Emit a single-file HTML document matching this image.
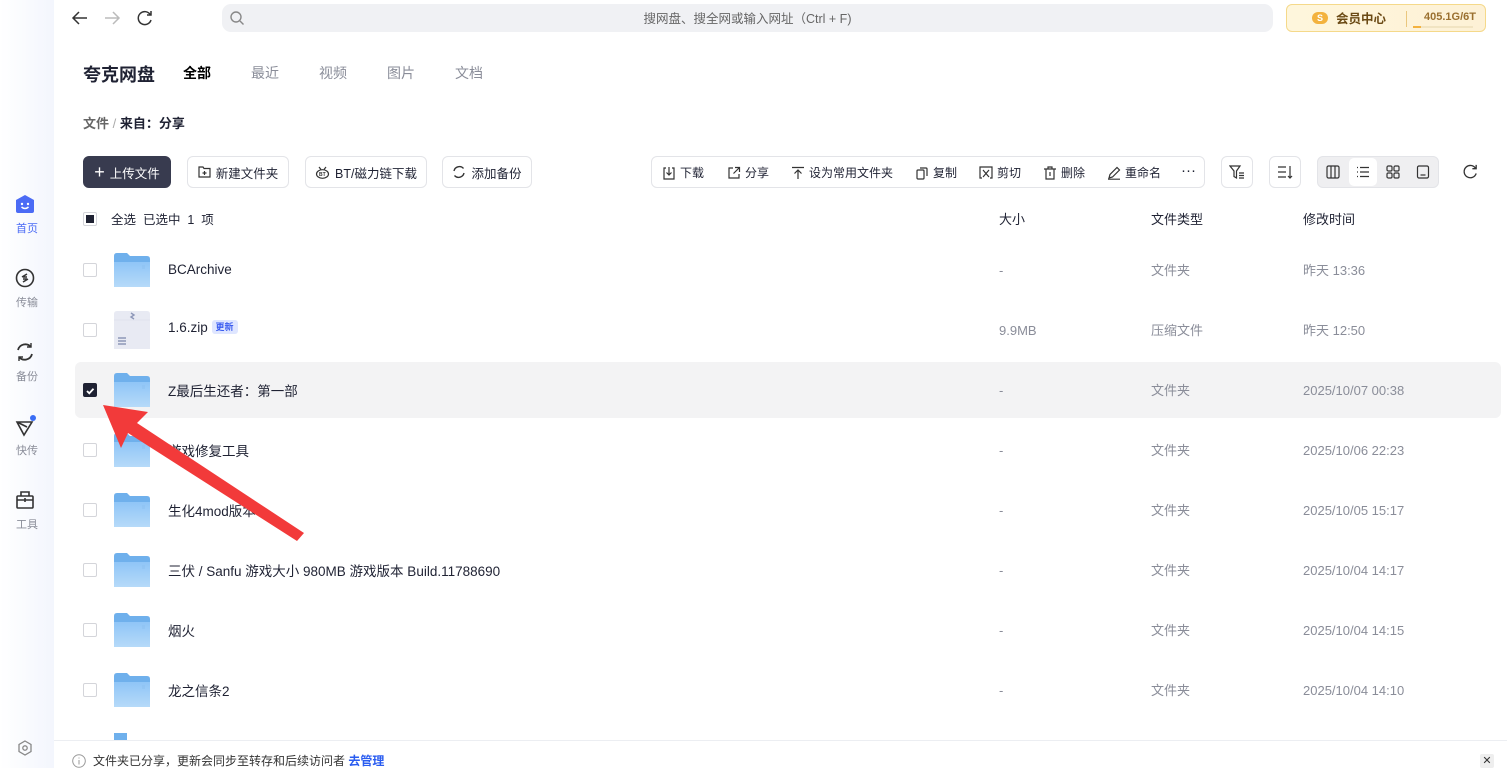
<!DOCTYPE html>
<html><head><meta charset="utf-8"><style>
*{margin:0;padding:0;box-sizing:border-box}
body{width:1507px;height:768px;overflow:hidden;background:#fff;font-family:"Liberation Sans","Noto Sans CJK SC",sans-serif;color:#1f2233;position:relative}
.abs{position:absolute}
.side{left:0;top:0;width:54px;height:768px;background:linear-gradient(90deg,#fff,#f3f6fd)}
.si{position:absolute;left:0;width:54px;text-align:center;font-size:11px;color:#8a8d99}
.btn{position:absolute;top:156px;height:32px;border:1px solid #e3e4e8;border-radius:6px;font-size:12.5px;display:flex;align-items:center;justify-content:center;gap:5px;color:#1f2233}
.tb{position:absolute;top:164px;font-size:12px;display:flex;align-items:center;gap:4px}
.row{position:absolute;left:75px;width:1426px;height:56px;border-radius:6px}
.cb{position:absolute;left:83px;width:14px;height:14px;border:1px solid #d4d5da;border-radius:2px;background:#fff}
.nm{position:absolute;left:168px;font-size:13.5px;margin-top:-2px}
.c2{position:absolute;left:999px;font-size:13px;color:#8a8d99}
.c3{position:absolute;left:1151px;font-size:13px;color:#8a8d99;margin-top:-3px}
.c4{position:absolute;left:1303px;font-size:13px;color:#8a8d99}
</style></head><body>
<div class="abs side"></div>
<svg class="abs" style="left:15px;top:194px" width="20" height="20" viewBox="0 0 20 20"><path d="M10 1 L19 6 V17 Q19 19 17 19 H3 Q1 19 1 17 V6Z" fill="#4b6bf5"/><circle cx="7" cy="10" r="1.2" fill="#fff"/><circle cx="13" cy="10" r="1.2" fill="#fff"/><path d="M6.5 13 Q10 16 13.5 13" stroke="#fff" stroke-width="1.5" fill="none"/></svg>
<div class="si" style="top:220px;color:#4b6bf5">首页</div>
<svg class="abs" style="left:15px;top:268px" width="20" height="20" viewBox="0 0 20 20" fill="none" stroke="#333" stroke-width="1.6"><circle cx="10" cy="10" r="8.5"/><path d="M7 9 L12 6 M8 14 L13 11 M8 9 L12 9 M8 11 L12 11"/></svg>
<div class="si" style="top:294px">传输</div>
<svg class="abs" style="left:15px;top:342px" width="20" height="20" viewBox="0 0 20 20" fill="none" stroke="#333" stroke-width="1.8"><path d="M3 8 A7.5 7.5 0 0 1 16 5 M17 12 A7.5 7.5 0 0 1 4 15"/><path d="M16 1 V5 H12 M4 19 V15 H8" stroke-width="1.4"/></svg>
<div class="si" style="top:368px">备份</div>
<svg class="abs" style="left:14px;top:414px" width="24" height="24" viewBox="0 0 24 24" fill="none" stroke="#333" stroke-width="1.6"><path d="M3 8 L18 8 L10 21 Z M3 8 L13 13"/><circle cx="19" cy="4" r="3" fill="#3a6df5" stroke="none"/></svg>
<div class="si" style="top:442px">快传</div>
<svg class="abs" style="left:15px;top:490px" width="20" height="20" viewBox="0 0 20 20" fill="none" stroke="#333" stroke-width="1.6"><rect x="2" y="6" width="16" height="12" rx="1"/><path d="M2 10 H18 M10 8 V12 M6 6 V2 H14 V6"/></svg>
<div class="si" style="top:516px">工具</div>
<svg class="abs" style="left:17px;top:740px" width="16" height="16" viewBox="0 0 16 16" fill="none" stroke="#888" stroke-width="1.3"><path d="M8 1 L14 4.5 V11.5 L8 15 L2 11.5 V4.5Z"/><circle cx="8" cy="8" r="2.2"/></svg>
<svg class="abs" style="left:71px;top:9px" width="18" height="18" viewBox="0 0 18 18" fill="none" stroke="#333" stroke-width="1.5"><path d="M16 9 H2 M8 3 L2 9 L8 15"/></svg>
<svg class="abs" style="left:103px;top:9px" width="18" height="18" viewBox="0 0 18 18" fill="none" stroke="#bbb" stroke-width="1.5"><path d="M2 9 H16 M10 3 L16 9 L10 15"/></svg>
<svg class="abs" style="left:136px;top:9px" width="18" height="18" viewBox="0 0 18 18" fill="none" stroke="#333" stroke-width="1.5"><path d="M14.5 6 A6.5 6.5 0 1 0 15 11"/><path d="M15 2 V6 H11"/></svg>
<div class="abs" style="left:222px;top:4px;width:1051px;height:28px;background:#f0f1f4;border-radius:9px"></div>
<svg class="abs" style="left:229px;top:10px" width="16" height="16" viewBox="0 0 16 16" fill="none" stroke="#888" stroke-width="1.4"><circle cx="7" cy="7" r="5"/><path d="M11 11 L14.5 14.5"/></svg>
<div class="abs" style="left:222px;width:1051px;top:8px;text-align:center;font-size:12.5px;color:#666">搜网盘、搜全网或输入网址（Ctrl + F)</div>
<div class="abs" style="left:1286px;top:4px;width:200px;height:28px;border:1px solid #f5d98a;border-radius:6px;background:linear-gradient(90deg,#fef6dc,#fdf1d6)"></div>
<div class="abs" style="left:1312px;top:12px;width:16px;height:12px;border-radius:6px;background:#f3b23e;color:#fff;font-size:9px;text-align:center;font-weight:bold;line-height:12px">S</div>
<div class="abs" style="left:1336px;top:8px;font-size:12.5px;font-weight:bold;color:#6b4a15">会员中心</div>
<div class="abs" style="left:1406px;top:11px;width:1px;height:16px;background:#eac77e"></div>
<div class="abs" style="left:1424px;top:11px;font-size:11px;color:#9a7030;font-weight:bold">405.1G/6T</div>
<div class="abs" style="left:1413px;top:26px;width:60px;height:2px;background:#f1e4c2"></div>
<div class="abs" style="left:1413px;top:26px;width:8px;height:2px;background:#f3b23e"></div>
<div class="abs" style="left:83px;top:61px;font-size:18px;font-weight:bold">夸克网盘</div>
<div class="abs" style="left:183px;top:63px;font-size:14px;font-weight:bold;color:#000">全部</div>
<div class="abs" style="left:251px;top:63px;font-size:14px;color:#8a8d99">最近</div>
<div class="abs" style="left:319px;top:63px;font-size:14px;color:#8a8d99">视频</div>
<div class="abs" style="left:387px;top:63px;font-size:14px;color:#8a8d99">图片</div>
<div class="abs" style="left:455px;top:63px;font-size:14px;color:#8a8d99">文档</div>
<div class="abs" style="left:83px;top:113px;font-size:13px;color:#666;font-weight:bold">文件 <span style="color:#aaa;font-weight:normal">/</span> <span style="color:#1f2233">来自：分享</span></div>
<div class="btn" style="left:83px;width:88px;background:#383b4f;border-color:#383b4f;color:#fff"><span style="font-size:18px;font-weight:300">+</span>上传文件</div>
<div class="btn" style="left:187px;width:102px"><svg width="13" height="12" viewBox="0 0 13 12" fill="none" stroke="#333" stroke-width="1.2"><path d="M1 1 H5 L6 2.5 H12 V11 H1Z M6.5 5 V9 M4.5 7 H8.5"/></svg>新建文件夹</div>
<div class="btn" style="left:305px;width:122px"><svg width="15" height="13" viewBox="0 0 15 13" fill="none" stroke="#333" stroke-width="1.2"><ellipse cx="7.5" cy="8" rx="6" ry="4.3"/><path d="M4 1 L6 3.5 M11 1 L9 3.5"/><text x="4" y="10" font-size="5" fill="#333" stroke="none" font-weight="bold">BT</text></svg>BT/磁力链下载</div>
<div class="btn" style="left:442px;width:90px"><svg width="14" height="14" viewBox="0 0 14 14" fill="none" stroke="#333" stroke-width="1.4"><path d="M2 6 A5.5 5.5 0 0 1 11.5 3.5 M12 8 A5.5 5.5 0 0 1 2.5 10.5"/></svg>添加备份</div>
<div class="abs" style="left:651px;top:156px;width:554px;height:32px;border:1px solid #e3e4e8;border-radius:6px"></div>
<div class="tb" style="left:662px"><svg width="14" height="14" viewBox="0 0 14 14" fill="none" stroke="#333" stroke-width="1.2"><path d="M4 2 H2 V13 H12 V2 H10 M7 1 V9 M4.5 6.5 L7 9 L9.5 6.5"/></svg>下载</div>
<div class="tb" style="left:727px"><svg width="14" height="14" viewBox="0 0 14 14" fill="none" stroke="#333" stroke-width="1.2"><path d="M6 2 H2 V12 H12 V8 M8 1.5 H12.5 V6 M12.5 1.5 L6.5 7.5"/></svg>分享</div>
<div class="tb" style="left:791px"><svg width="14" height="14" viewBox="0 0 14 14" fill="none" stroke="#333" stroke-width="1.2"><path d="M1 1.5 H13 M7 13 V4 M3.5 7.5 L7 4 L10.5 7.5"/></svg>设为常用文件夹</div>
<div class="tb" style="left:915px"><svg width="14" height="14" viewBox="0 0 14 14" fill="none" stroke="#333" stroke-width="1.2"><rect x="2" y="4" width="7" height="9" rx="1"/><path d="M5 2 H11 Q12 2 12 3 V10"/></svg>复制</div>
<div class="tb" style="left:979px"><svg width="14" height="14" viewBox="0 0 14 14" fill="none" stroke="#333" stroke-width="1.2"><path d="M3 12 H1 V1 H13 V12 H11 M4 4 L10 11 M10 4 L4 11"/></svg>剪切</div>
<div class="tb" style="left:1043px"><svg width="14" height="14" viewBox="0 0 14 14" fill="none" stroke="#333" stroke-width="1.2"><path d="M1 3 H13 M5 3 V1 H9 V3 M3 3 V13 H11 V3 M7 6 V10"/></svg>删除</div>
<div class="tb" style="left:1107px"><svg width="14" height="14" viewBox="0 0 14 14" fill="none" stroke="#333" stroke-width="1.2"><path d="M2 12 L3 8.5 L10 1.5 L12.5 4 L5.5 11Z M1 13.2 H13"/></svg>重命名</div>
<div class="tb" style="left:1181px;top:162px;font-size:15px">···</div>
<div class="abs" style="left:1221px;top:156px;width:32px;height:32px;border:1px solid #e3e4e8;border-radius:6px"></div>
<svg class="abs" style="left:1229px;top:164px" width="16" height="16" viewBox="0 0 16 16" fill="none" stroke="#333" stroke-width="1.2"><path d="M1 2 H11 L7.5 7 V14 L5 12.5 V7Z M10 9 H15 M10 11.5 H15 M10 14 H15"/></svg>
<div class="abs" style="left:1269px;top:156px;width:32px;height:32px;border:1px solid #e3e4e8;border-radius:6px"></div>
<svg class="abs" style="left:1277px;top:164px" width="16" height="16" viewBox="0 0 16 16" fill="none" stroke="#333" stroke-width="1.2"><path d="M1 3 H9 M1 8 H9 M1 13 H9 M13 2 V14 M11 12 L13 14 L15 12"/></svg>
<div class="abs" style="left:1317px;top:156px;width:122px;height:32px;border-radius:6px;background:#efeff1;border:1px solid #e3e4e8"></div>
<div class="abs" style="left:1349px;top:158px;width:28px;height:28px;border-radius:5px;background:#fff"></div>
<svg class="abs" style="left:1326px;top:165px" width="14" height="14" viewBox="0 0 14 14" fill="none" stroke="#333" stroke-width="1.2"><rect x="1" y="1" width="12" height="12" rx="1.5"/><path d="M5 1 V13 M9 1 V13"/></svg>
<svg class="abs" style="left:1356px;top:165px" width="14" height="14" viewBox="0 0 14 14" fill="none" stroke="#333" stroke-width="1.2"><path d="M1 2.5 H2 M4 2.5 H13 M1 7 H2 M4 7 H13 M1 11.5 H2 M4 11.5 H13"/></svg>
<svg class="abs" style="left:1386px;top:165px" width="14" height="14" viewBox="0 0 14 14" fill="none" stroke="#333" stroke-width="1.2"><rect x="1" y="1" width="5" height="5" rx="1.3"/><rect x="8" y="1" width="5" height="5" rx="1.3"/><rect x="1" y="8" width="5" height="5" rx="1.3"/><rect x="8" y="8" width="5" height="5" rx="1.3"/></svg>
<svg class="abs" style="left:1416px;top:165px" width="14" height="14" viewBox="0 0 14 14" fill="none" stroke="#333" stroke-width="1.2"><rect x="1.5" y="1" width="11" height="12" rx="1.5"/><path d="M4.5 10 H9.5"/></svg>
<svg class="abs" style="left:1462px;top:163px" width="17" height="17" viewBox="0 0 18 18" fill="none" stroke="#333" stroke-width="1.4"><path d="M14.5 6 A6.5 6.5 0 1 0 15 11"/><path d="M15 2 V6 H11"/></svg>
<div class="abs" style="left:83px;top:212px;width:14px;height:14px;border:1px solid #d4d5da;border-radius:2px"><div style="margin:2px;width:8px;height:8px;background:#1f2233"></div></div>
<div class="abs" style="left:111px;top:209px;font-size:12.5px">全选&nbsp;&nbsp;已选中&nbsp;&nbsp;1&nbsp;&nbsp;项</div>
<div class="abs" style="left:999px;top:209px;font-size:13px">大小</div>
<div class="abs" style="left:1151px;top:209px;font-size:13px">文件类型</div>
<div class="abs" style="left:1303px;top:209px;font-size:13px">修改时间</div>
<div class="row" style="top:362px;background:#f3f3f4"></div>
<svg width="0" height="0" style="position:absolute"><defs><g id="fd"><path d="M0 3 Q0 0 3 0 H13 L16 3 H33 Q36 3 36 6 V34 H0Z" fill="#6fb0ec"/><path d="M0 9 H36 V34 H0Z" fill="url(#g1)"/><path d="M28 13 H31 M28 15 H31" stroke="#8cc0f0"/></g><linearGradient id="g1" x1="0" y1="0" x2="0" y2="1"><stop offset="0" stop-color="#8fc5f7"/><stop offset="1" stop-color="#b6daf9"/></linearGradient></defs></svg>
<div class="cb" style="top:263px"></div><svg class="abs" style="left:114px;top:253px" width="36" height="34"><use href="#fd"/></svg><div class="nm" style="top:264px">BCArchive</div><div class="c2" style="top:263px">-</div><div class="c3" style="top:263px">文件夹</div><div class="c4" style="top:260px">昨天 13:36</div>
<div class="cb" style="top:323px"></div><svg class="abs" style="left:114px;top:311px" width="36" height="38" viewBox="0 0 36 38"><path d="M3 0 H33 Q36 0 36 3 V38 H0 V3 Q0 0 3 0Z" fill="#e8eaf3"/><path d="M0 9 H36" stroke="#dfe2ee"/><path d="M4 27 H12 M4 30 H12 M4 33 H12" stroke="#8d97b8" stroke-width="1.6"/><path d="M17 2 L20 4 L17 6 L20 8" stroke="#8d97b8" stroke-width="1.4" fill="none"/></svg><div class="nm" style="top:322px">1.6.zip <span style="font-size:9px;background:#dfe6ff;color:#3a5cf0;padding:2px 4px;border-radius:3px;vertical-align:2px;font-weight:bold">更新</span></div><div class="c2" style="top:323px">9.9MB</div><div class="c3" style="top:323px">压缩文件</div><div class="c4" style="top:320px">昨天 12:50</div>
<div class="cb" style="top:383px;background:#1f2233;border-color:#1f2233"><svg width="12" height="12" viewBox="0 0 12 12"><path d="M3 6 L5.3 8.3 L9.5 3.8" stroke="#fff" stroke-width="1.8" fill="none"/></svg></div><svg class="abs" style="left:114px;top:373px" width="36" height="34"><use href="#fd"/></svg><div class="nm" style="top:382px">Z最后生还者：第一部</div><div class="c2" style="top:383px">-</div><div class="c3" style="top:383px">文件夹</div><div class="c4" style="top:383px">2025/10/07 00:38</div>
<div class="cb" style="top:443px"></div><svg class="abs" style="left:114px;top:433px" width="36" height="34"><use href="#fd"/></svg><div class="nm" style="top:442px">游戏修复工具</div><div class="c2" style="top:443px">-</div><div class="c3" style="top:443px">文件夹</div><div class="c4" style="top:443px">2025/10/06 22:23</div>
<div class="cb" style="top:503px"></div><svg class="abs" style="left:114px;top:493px" width="36" height="34"><use href="#fd"/></svg><div class="nm" style="top:502px">生化4mod版本</div><div class="c2" style="top:503px">-</div><div class="c3" style="top:503px">文件夹</div><div class="c4" style="top:503px">2025/10/05 15:17</div>
<div class="cb" style="top:563px"></div><svg class="abs" style="left:114px;top:553px" width="36" height="34"><use href="#fd"/></svg><div class="nm" style="top:562px">三伏 / Sanfu 游戏大小 980MB 游戏版本 Build.11788690</div><div class="c2" style="top:563px">-</div><div class="c3" style="top:563px">文件夹</div><div class="c4" style="top:563px">2025/10/04 14:17</div>
<div class="cb" style="top:623px"></div><svg class="abs" style="left:114px;top:613px" width="36" height="34"><use href="#fd"/></svg><div class="nm" style="top:622px">烟火</div><div class="c2" style="top:623px">-</div><div class="c3" style="top:623px">文件夹</div><div class="c4" style="top:623px">2025/10/04 14:15</div>
<div class="cb" style="top:683px"></div><svg class="abs" style="left:114px;top:673px" width="36" height="34"><use href="#fd"/></svg><div class="nm" style="top:682px">龙之信条2</div><div class="c2" style="top:683px">-</div><div class="c3" style="top:683px">文件夹</div><div class="c4" style="top:683px">2025/10/04 14:10</div>
<div class="abs" style="left:114px;top:733px;width:13px;height:7px;background:#6fb0ec"></div>
<div class="abs" style="left:54px;top:740px;width:1453px;height:28px;background:#fff;border-top:1px solid #eceef2"></div>
<svg class="abs" style="left:72px;top:754px" width="14" height="14" viewBox="0 0 14 14" fill="none" stroke="#999" stroke-width="1"><circle cx="7" cy="7" r="6.3"/><path d="M7 6 V10.5 M7 3.5 V4.5"/></svg>
<div class="abs" style="left:93px;top:752px;font-size:12px;color:#333">文件夹已分享，更新会同步至转存和后续访问者 <span style="color:#2a5cf0;font-weight:bold">去管理</span></div>
<div class="abs" style="left:1480px;top:754px;width:14px;height:14px;background:#eee;border-radius:2px;font-size:11px;text-align:center;line-height:14px;color:#333">✕</div>
<svg class="abs" style="left:0;top:0" width="1507" height="768"><polygon points="103,405 148,412 137,423 304,533 297,541 128,433 121,448" fill="#f23a3a"/></svg>
</body></html>
